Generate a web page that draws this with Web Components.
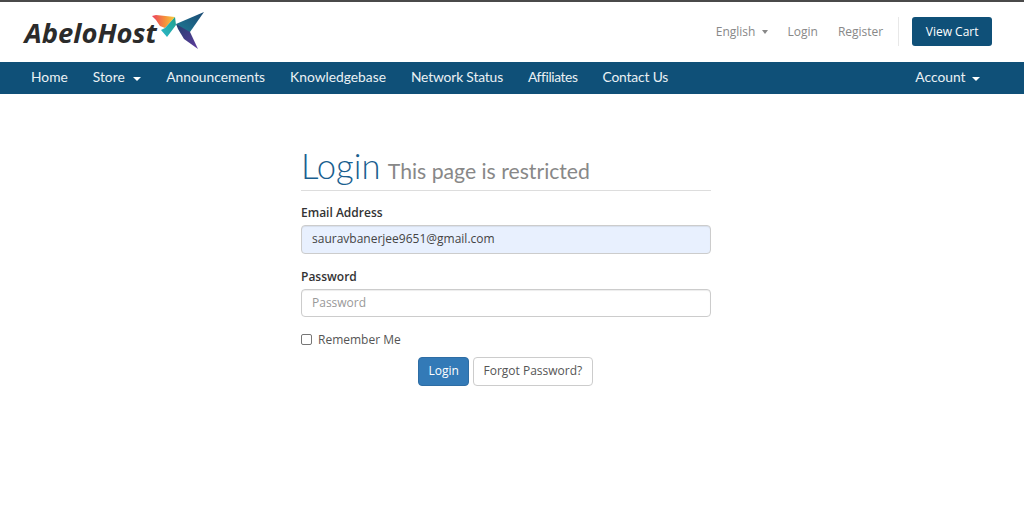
<!DOCTYPE html>
<html lang="en">
<head>
<meta charset="utf-8">
<title>Login</title>
<style>
    html, body { margin: 0; padding: 0; background: #fff; }
    body { font-family: "Open Sans", sans-serif; height: 506px; overflow: hidden; }
</style>
</head>
<body>
<site-header></site-header>
<site-nav></site-nav>
<login-panel></login-panel>

<script>
class SiteHeader extends HTMLElement {
    constructor () {
        super();
        const root = this.attachShadow({mode: 'open'});

        root.innerHTML = `<style>
            :host {
                display: flex;
                align-items: center;
                justify-content: space-between;
                height: 58px;
                box-sizing: content-box;
                border-top: 2px solid #4a4a4a;
                padding: 0 32px 2px 24.5px;
                font-family: "Open Sans", sans-serif;
                font-size: 12px;
                color: #888;
            }
            .logo { display: flex; align-items: flex-start; height: 40px; }
            .logo b {
                font-size: 27.4px;
                font-style: italic;
                font-weight: 700;
                color: #2b2b2b;
                line-height: 36px;
                margin-top: 4px;
            }
            .logo svg { margin-left: -7px; margin-top: -2px; }
            .links { display: flex; align-items: center; }
            .links span { margin-right: 20px; }
            .caret {
                display: inline-block;
                width: 0;
                height: 0;
                margin-left: 3px;
                vertical-align: middle;
                border-top: 4px solid #888;
                border-left: 3.5px solid transparent;
                border-right: 3.5px solid transparent;
            }
            .sep { width: 1px; height: 29px; background: #e8e8e8; margin-right: 13px; }
            .cart {
                background: #0f5078;
                color: #fff;
                border-radius: 3px;
                height: 29px;
                line-height: 29px;
                padding: 0 13.5px;
            }
        </style>
        <div class="logo">
            <b>AbeloHost</b>
            <svg width="56" height="42" viewBox="150 10 56 42">
                <defs>
                    <linearGradient id="warm" x1="0" y1="0" x2="1" y2="0">
                        <stop offset="0" stop-color="#ec3f5f"/>
                        <stop offset=".55" stop-color="#f58f3c"/>
                        <stop offset="1" stop-color="#f6d03e"/>
                    </linearGradient>
                    <linearGradient id="teal" x1="1" y1="0" x2="0" y2="1">
                        <stop offset="0" stop-color="#1f9f8a"/>
                        <stop offset="1" stop-color="#2cb8cc"/>
                    </linearGradient>
                    <linearGradient id="blue" x1="0" y1="1" x2="1" y2="0">
                        <stop offset="0" stop-color="#1d7d96"/>
                        <stop offset="1" stop-color="#1c4a74"/>
                    </linearGradient>
                    <linearGradient id="purple" x1="0" y1="0" x2="1" y2="1">
                        <stop offset="0" stop-color="#23406f"/>
                        <stop offset="1" stop-color="#5f3a9c"/>
                    </linearGradient>
                </defs>
                <polygon points="152,17 156,16 175,18 165,29 160,27 156,21" fill="url(#warm)"/>
                <polygon points="165,29 175,18 176,26 167,38 161,31" fill="url(#teal)"/>
                <polygon points="176,25 204,13 190,33 185,35" fill="url(#blue)"/>
                <polygon points="176,25 190,33 198,50 184,40 178,30" fill="url(#purple)"/>
            </svg>
        </div>
        <div class="links">
            <span>English <i class="caret"></i></span>
            <span>Login</span>
            <span style="margin-right:15px">Register</span>
            <div class="sep"></div>
            <div class="cart">View Cart</div>
        </div>`;
    }
}

class SiteNav extends HTMLElement {
    constructor () {
        super();
        const root = this.attachShadow({mode: 'open'});

        root.innerHTML = `<style>
            :host {
                display: flex;
                align-items: center;
                height: 32px;
                background: #0f5078;
                color: #eaf0f4;
                font-family: Lato, sans-serif;
                font-size: 13.8px;
                padding: 0 44px 3px 31px;
                box-sizing: border-box;
            }
            nav { display: flex; gap: 25px; flex: 1; }
            .network { letter-spacing: -.15px; }
            .affiliates { letter-spacing: -.4px; }
            .contact { letter-spacing: -.15px; }
            .store .caret { margin-left: 5px; }
            .caret {
                display: inline-block;
                width: 0;
                height: 0;
                margin-left: 3px;
                vertical-align: middle;
                border-top: 4px solid #fff;
                border-left: 4px solid transparent;
                border-right: 4px solid transparent;
            }
        </style>
        <nav>
            <span>Home</span>
            <span class="store">Store <i class="caret"></i></span>
            <span>Announcements</span>
            <span>Knowledgebase</span>
            <span class="network">Network Status</span>
            <span class="affiliates">Affiliates</span>
            <span class="contact">Contact Us</span>
        </nav>
        <span>Account <i class="caret"></i></span>`;
    }
}

class FormField extends HTMLElement {
    constructor () {
        super();
        const root = this.attachShadow({mode: 'open'});
        const value = this.getAttribute('value');
        const filled = value !== null;

        root.innerHTML = `<style>
            :host { display: block; font-family: "Open Sans", sans-serif; font-size: 12px; }
            label { display: block; font-weight: 600; color: #333; line-height: 17px; margin-bottom: 4px; }
            div {
                box-sizing: border-box;
                height: 28.5px;
                line-height: 26.5px;
                padding: 0 10px;
                border: 1px solid #ccc;
                border-radius: 4px;
                box-shadow: inset 0 1px 1px rgba(0, 0, 0, .075);
                background: ${filled ? '#e8f0fe' : '#fff'};
                color: ${filled ? '#444' : '#999'};
            }
        </style>
        <label>${this.getAttribute('label')}</label>
        <div>${filled ? value : this.getAttribute('placeholder')}</div>`;
    }
}

class LoginPanel extends HTMLElement {
    constructor () {
        super();
        const root = this.attachShadow({mode: 'open'});

        root.innerHTML = `<style>
            :host {
                display: block;
                width: 410px;
                margin-left: 301px;
                padding-top: 53px;
                font-family: "Open Sans", sans-serif;
                font-size: 12px;
                color: #555;
            }
            .title {
                font-family: Lato, sans-serif;
                font-weight: 300;
                border-bottom: 1px solid #ddd;
                margin-bottom: 13px;
                line-height: 38px;
                font-size: 34.6px;
                color: #1a5f8f;
                white-space: nowrap;
            }
            .title small { font-size: 21.2px; color: #888; font-weight: 400; margin-left: -2px; }
            form-field { margin-bottom: 14px; }
            .remember { display: flex; align-items: center; gap: 6px; height: 17px; margin-top: 8px; }
            .remember i {
                box-sizing: border-box;
                width: 11px;
                height: 11px;
                border: 1px solid #767676;
                border-radius: 2px;
            }
            .actions { display: flex; justify-content: center; gap: 4px; margin-top: 9px; padding-right: 1px; }
            .btn {
                box-sizing: border-box;
                height: 28.5px;
                line-height: 26.5px;
                padding: 0 9.5px;
                border: 1px solid #ccc;
                border-radius: 4px;
            }
            .btn.primary { background: #337ab7; border-color: #2e6da4; color: #fff; padding: 0 9.2px; }
        </style>
        <div class="title">Login <small>This page is restricted</small></div>
        <form-field label="Email Address" value="sauravbanerjee9651@gmail.com"></form-field>
        <form-field label="Password" placeholder="Password"></form-field>
        <div class="remember"><i></i>Remember Me</div>
        <div class="actions">
            <div class="btn primary">Login</div>
            <div class="btn">Forgot Password?</div>
        </div>`;
    }
}

customElements.define('site-header', SiteHeader);
customElements.define('site-nav', SiteNav);
customElements.define('form-field', FormField);
customElements.define('login-panel', LoginPanel);
</script>
</body>
</html>
